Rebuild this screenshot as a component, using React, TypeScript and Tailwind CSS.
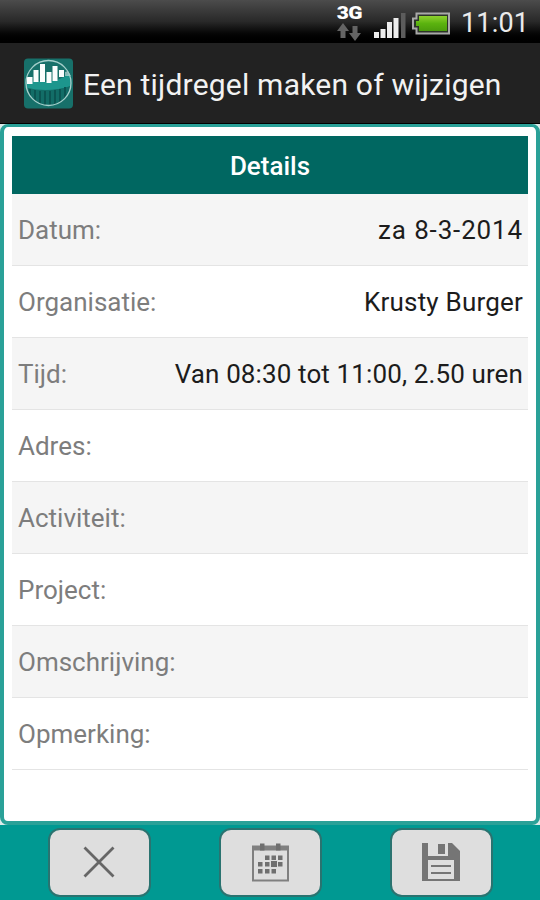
const rows = [
  { label: 'Datum:', value: 'za 8-3-2014', spacing: 'tracking-[0.85px]' },
  { label: 'Organisatie:', value: 'Krusty Burger', spacing: 'tracking-[0.2px]' },
  { label: 'Tijd:', value: 'Van 08:30 tot 11:00, 2.50 uren', spacing: 'tracking-[0.12px]' },
  { label: 'Adres:', value: '', spacing: '' },
  { label: 'Activiteit:', value: '', spacing: '' },
  { label: 'Project:', value: '', spacing: '' },
  { label: 'Omschrijving:', value: '', spacing: '' },
  { label: 'Opmerking:', value: '', spacing: '' },
];

function StatusBar() {
  return (
    <div className="flex h-[43px] items-start justify-end bg-linear-to-b from-[#4c4c4c] via-[#292929] to-black pr-3">
      <div className="flex w-[30px] flex-col items-center pt-[4px]">
        <span className="origin-center scale-x-110 text-[19px] leading-[17px] font-black tracking-[-0.6px] text-white">3G</span>
        <svg className="mt-[2px]" width="26" height="18" viewBox="0 0 26 18" fill="#646464">
          <path d="M7 0l6 8H9.500v7h-5V8H1zM19 18l-6-8h3.500V3h5v7H25z" />
        </svg>
      </div>
      <svg className="mt-[11px] ml-[8px]" width="34" height="28" viewBox="0 0 34 28" fill="#ededed">
        <rect x="2" y="21" width="5" height="6" />
        <rect x="8.500" y="18" width="5" height="9" />
        <rect x="15" y="11" width="5" height="16" />
        <rect x="21.500" y="7" width="5" height="20" />
        <rect x="29" y="2" width="4.500" height="25" fill="#5c5c5c" />
      </svg>
      <svg className="mt-[12px] ml-[5px]" width="40" height="24" viewBox="0 0 40 24">
        <defs>
          <linearGradient id="charge" x1="0" y1="0" x2="0" y2="1">
            <stop offset="0" stopColor="#8ed12e" />
            <stop offset="0.5" stopColor="#5bb30f" />
            <stop offset="1" stopColor="#4b9c0c" />
          </linearGradient>
        </defs>
        <path d="M5.500 1.500h32.500v20H5.500v-5H2v-10h3.500z" fill="#2c3328" stroke="#a9a9a9" strokeWidth="2" />
        <path d="M8 4h28v15H8v-5H5V9h3z" fill="url(#charge)" />
      </svg>
      <span className="ml-[10px] w-[67px] text-[27px] leading-[47px] tracking-[0.2px] whitespace-nowrap text-[#ebebeb]">11:01</span>
    </div>
  );
}

function Logo() {
  return (
    <svg width="50" height="51" viewBox="0 0 50 51">
      <defs>
        <clipPath id="disc">
          <circle cx="24.500" cy="25" r="22.500" />
        </clipPath>
      </defs>
      <rect x="0" y="0.500" width="49" height="50" rx="4" fill="#17706a" />
      <g clipPath="url(#disc)">
        <path d="M0 25q12-3 23-1 14-1 26-11v15q-25 8-49 2z" fill="#1d968d" />
        <path d="M0 29q25 7 49-2v24H0z" fill="#126d67" />
        <path
          d="M6 31v20M11 32v20M16 33v20M21 33v20M26 33v20M31 32v20M36 31v20M41 29v20"
          stroke="#0b5552"
          strokeWidth="2"
        />
      </g>
      <g fill="#fafdfd">
        <rect x="3" y="19" width="5.500" height="7" />
        <rect x="9.500" y="12" width="5" height="12" />
        <rect x="16" y="6" width="5" height="18" />
        <rect x="22.500" y="14" width="5" height="11" />
        <rect x="28.500" y="8" width="5" height="15" />
        <rect x="35" y="12" width="5" height="7" />
        <path d="M41 14l3-1 3 5h-6z" opacity="0.5" />
      </g>
      <circle cx="24.500" cy="25" r="22.500" fill="none" stroke="#a5cfcb" strokeWidth="1.300" />
    </svg>
  );
}

function CloseIcon() {
  return (
    <svg width="40" height="40" viewBox="0 0 40 40">
      <path d="M5.500 5.500l29 29M34.500 5.500l-29 29" stroke="#666" strokeWidth="2.800" />
    </svg>
  );
}

function CalendarIcon() {
  return (
    <svg width="40" height="40" viewBox="0 0 40 40" fill="#6f6f6f">
      <path d="M2 3.500h37v36H2zM4 8.500v29h33v-29z" fillRule="evenodd" fill="#808080" />
      <path d="M10 1.500h4.500v7H10zM26 1.500h4.500v7H26z" />
      <path d="M15 13.500h4.500v4.500H15zM21.500 13.500H26v4.500h-4.500zM28 13.500h4.500v4.500H28zM8 20h4.500v4.500H8zM15 20h4.500v4.500H15zM21 19h6v6h-6zM28 20h4.500v4.500H28zM8 27h4.500v4.500H8zM15 27h4.500v4.500H15zM21.500 27H26v4.500h-4.500z" />
    </svg>
  );
}

function SaveIcon() {
  return (
    <svg width="40" height="40" viewBox="0 0 40 40" fill="#757575">
      <path d="M1 1h6v13h20V1h4l8 8v30H1zM7 18v19h26V18z" fillRule="evenodd" />
      <path d="M17 2h7v10h-7z" />
      <path d="M10 23h20v2H10zM10 30h20v2H10z" />
    </svg>
  );
}

function ToolButton({ label, children }: { label: string; children: React.ReactNode }) {
  return (
    <button
      aria-label={label}
      className="flex h-[69px] w-[103px] items-center justify-center rounded-[12px] border-2 border-[#2a7370] bg-[#dedede] pr-px pb-px"
    >
      {children}
    </button>
  );
}

export default function App() {
  return (
    <div className="flex h-[900px] w-[540px] flex-col overflow-hidden bg-[#dcebea] font-['Roboto',sans-serif]">
      <StatusBar />

      {/* Title bar */}
      <header className="flex h-[81px] items-center border-b border-black bg-[#222] pl-6">
        <Logo />
        <h1 className="ml-[9px] pt-[2px] text-[30px] tracking-[0.21px] whitespace-nowrap text-[#f2f2f2]">
          Een tijdregel maken of wijzigen
        </h1>
      </header>

      {/* Details */}
      <main className="h-[701px] rounded-[8px] border-4 border-t-3 border-[#2aa198] bg-white px-2 pt-[9px]">
        <h2 className="h-[58px] bg-[#006761] text-center text-[26px] leading-[60px] font-medium text-white">Details</h2>
        {rows.map((row) => (
          <div
            key={row.label}
            className="flex h-[72px] items-center justify-between border-b border-[#e4e4e4] pt-px pr-[5px] pl-[6px] text-[26px] odd:bg-white even:bg-[#f5f5f5]"
          >
            <span className="text-[#7d7d7d]">{row.label}</span>
            <span className={`text-[#1c1c1c] ${row.spacing}`}>{row.value}</span>
          </div>
        ))}
      </main>

      <footer className="flex h-[75px] items-start justify-between bg-[#009992] pt-[3px] pr-[47px] pl-12">
        <ToolButton label="Annuleren">
          <CloseIcon />
        </ToolButton>
        <ToolButton label="Kalender">
          <CalendarIcon />
        </ToolButton>
        <ToolButton label="Opslaan">
          <SaveIcon />
        </ToolButton>
      </footer>
    </div>
  );
}
